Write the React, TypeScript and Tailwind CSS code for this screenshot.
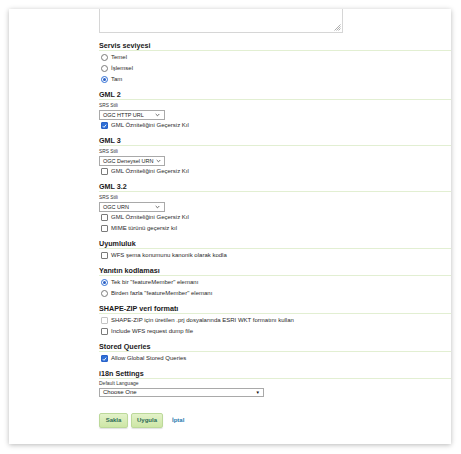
import React from "react";

const font = { fontFamily: '"Liberation Sans", Arial, sans-serif' };

function Heading({ children, mt = "mt-[5px]" }: { children: React.ReactNode; mt?: string }) {
  return (
    <div
      className={`${mt} h-[10px] whitespace-nowrap border-b border-[#e2efd2] text-[7.2px] font-bold leading-[9px] text-[#1a1a1a]`}
    >
      {children}
    </div>
  );
}

function Radio({ checked, label }: { checked?: boolean; label: string }) {
  return (
    <div className="flex h-[11px] items-center">
      <span
        className={`ml-[2px] flex h-[7px] w-[7px] items-center justify-center rounded-full border bg-white ${
          checked ? "border-[#2f6fd6]" : "border-[#7a7a7a]"
        }`}
      >
        {checked && <span className="h-[3px] w-[3px] rounded-full bg-[#2a5fc4]" />}
      </span>
      <span className="ml-[3px] whitespace-nowrap text-[6px] leading-[7px] text-[#2a2a2a]">{label}</span>
    </div>
  );
}

function Check({ checked, label, disabled }: { checked?: boolean; label: string; disabled?: boolean }) {
  return (
    <div className="flex h-[11px] items-center">
      <span
        className={`ml-[2px] flex h-[7px] w-[7px] items-center justify-center rounded-[1px] border ${
          checked
            ? "border-[#2a62c9] bg-[#2f6fd6]"
            : disabled
            ? "border-[#c4c4c4] bg-white"
            : "border-[#7a7a7a] bg-white"
        }`}
      >
        {checked && (
          <svg width="6" height="6" viewBox="0 0 6 6">
            <path d="M1 3.2 L2.4 4.6 L5 1.4" fill="none" stroke="#fff" strokeWidth="1.1" />
          </svg>
        )}
      </span>
      <span className="ml-[3px] whitespace-nowrap text-[6px] leading-[7px] text-[#2a2a2a]">{label}</span>
    </div>
  );
}

function SrsSelect({ value, width }: { value: string; width: string }) {
  return (
    <>
      <div className="mt-[2px] h-[7px] text-[4.8px] leading-[7px] text-[#333]">SRS Stili</div>
      <div
        className={`mt-[1px] flex h-[10px] ${width} items-center justify-between gap-[3px] whitespace-nowrap border border-[#a9a9a9] bg-white pl-[3px] pr-[4px] text-[5.5px] leading-[8px] text-[#222]`}
      >
        <span>{value}</span>
        <svg className="shrink-0" width="5" height="4" viewBox="0 0 5 4">
          <path d="M0.7 1 L2.5 2.8 L4.3 1" fill="none" stroke="#444" strokeWidth="0.8" />
        </svg>
      </div>
    </>
  );
}

export default function App() {
  return (
    <div className="h-[454px] w-[461px] bg-white pl-[9px] pt-[9px]" style={font}>
      <div className="h-[435px] w-[442px] overflow-hidden bg-white pl-[90px] shadow-[0_1px_5px_rgba(0,0,0,0.28)]">
        {/* textarea */}
        <div className="relative -mt-[12px] h-[36px] w-[244px] border border-[#d6d6d6] bg-white">
          <svg className="absolute bottom-[1px] right-[1px]" width="7" height="7" viewBox="0 0 7 7">
            <path d="M6.5 0.5 L0.5 6.5 M6.5 2.5 L2.5 6.5 M6.5 4.5 L4.5 6.5" stroke="#9a9a9a" strokeWidth="0.8" />
          </svg>
        </div>

        <Heading mt="mt-[8px]">Servis seviyesi</Heading>
        <div className="mt-[1px]">
          <Radio label="Temel" />
          <Radio label="İşlemsel" />
          <Radio label="Tam" checked />
        </div>

        <Heading>GML 2</Heading>
        <SrsSelect value="OGC HTTP URL" width="w-[66px]" />
        <Check label="GML Özniteliğini Geçersiz Kıl" checked />

        <Heading>GML 3</Heading>
        <SrsSelect value="OGC Deneysel URN" width="w-[66px]" />
        <Check label="GML Özniteliğini Geçersiz Kıl" />

        <Heading>GML 3.2</Heading>
        <SrsSelect value="OGC URN" width="w-[66px]" />
        <Check label="GML Özniteliğini Geçersiz Kıl" />
        <Check label="MIME türünü geçersiz kıl" />

        <Heading>Uyumluluk</Heading>
        <div className="mt-[1px]">
          <Check label="WFS şema konumunu kanonik olarak kodla" />
        </div>

        <Heading>Yanıtın kodlaması</Heading>
        <div className="mt-[1px]">
          <Radio label={'Tek bir "featureMember" elemanı'} checked />
          <Radio label={'Birden fazla "featureMember" elemanı'} />
        </div>

        <Heading>SHAPE-ZIP veri formatı</Heading>
        <div className="mt-[1px]">
          <Check label="SHAPE-ZIP için üretilen .prj dosyalarında ESRI WKT formatını kullan" disabled />
          <Check label="Include WFS request dump file" />
        </div>

        <Heading>Stored Queries</Heading>
        <div className="mt-[1px]">
          <Check label="Allow Global Stored Queries" checked />
        </div>

        <Heading>i18n Settings</Heading>
        <div className="mt-[1px] h-[7px] text-[5px] leading-[7px] text-[#333]">Default Language</div>
        <div className="mt-[1px] flex h-[9px] w-[165px] items-center justify-between border border-[#a9a9a9] bg-white px-[3px] text-[6px] leading-[7px] text-[#222]">
          <span>Choose One</span>
          <span className="text-[4.5px] leading-[5px] text-[#111]">▼</span>
        </div>

        <div className="mt-[16px] flex items-center">
          <button className="flex h-[15px] w-[29px] items-center justify-center rounded-[2px] border border-[#bcd99a] bg-gradient-to-b from-[#e3f2c9] to-[#cde6a5] text-[6px] font-bold text-[#2c6a55] shadow-[0_1px_1px_rgba(0,0,0,0.12)]">
            Sakla
          </button>
          <button className="ml-[3px] flex h-[15px] w-[32px] items-center justify-center rounded-[2px] border border-[#bcd99a] bg-gradient-to-b from-[#e3f2c9] to-[#cde6a5] text-[6px] font-bold text-[#2c6a55] shadow-[0_1px_1px_rgba(0,0,0,0.12)]">
            Uygula
          </button>
          <span className="ml-[9px] text-[6px] font-bold text-[#1f78ad]">İptal</span>
        </div>
      </div>
    </div>
  );
}
